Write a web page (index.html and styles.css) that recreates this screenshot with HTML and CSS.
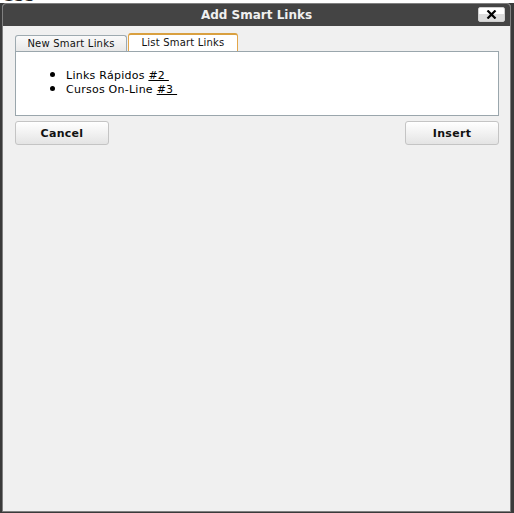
FILE: index.html
```html
<!DOCTYPE html>
<html>
<head>
<meta charset="utf-8">
<link rel="stylesheet" href="styles.css">
</head>
<body>
<div class="behind"><p>ress</p></div>
<div class="dialog">
  <div class="titlebar">
    <span class="title">Add Smart Links</span>
    <button class="close" type="button"><svg width="11" height="9" viewBox="0 0 11 9"><path d="M1.5 0.5 L9.5 8.5 M9.5 0.5 L1.5 8.5" stroke="#000" stroke-width="2.2"/></svg></button>
  </div>
  <div class="content">
    <div class="tabs">
      <div class="tab">New Smart Links</div>
      <div class="tab active">List Smart Links</div>
    </div>
    <div class="panel">
      <ul class="links">
        <li>Links Rápidos <a href="#">#2 </a></li>
        <li>Cursos On-Line <a href="#">#3 </a></li>
      </ul>
    </div>
    <div class="actions">
      <button class="btn" type="button">Cancel</button>
      <button class="btn" type="button">Insert</button>
    </div>
  </div>
</div>
</body>
</html>
```

FILE: styles.css
```css
html, body {
  margin: 0;
  padding: 0;
}
body {
  background: #3a3a3a;
  height: 513px;
  overflow: hidden;
  font-family: "DejaVu Sans", Verdana, sans-serif;
  font-size: 11px;
  color: #000;
}
.behind {
  height: 3px;
  overflow: hidden;
  background: #fff;
}
.behind p {
  margin: -16px 0 0 -6px;
  font-size: 20px;
  line-height: 20px;
  color: #222;
}
.dialog {
  margin-left: 2px;
  width: 507px;
  height: 507px;
  border: 1px solid #808080;
  border-radius: 4px 4px 0 0;
  background: #f0f0f0;
  display: flex;
  flex-direction: column;
}
.titlebar {
  height: 22px;
  background: #444444;
  border-radius: 3px 3px 0 0;
  display: flex;
  align-items: center;
  justify-content: center;
  position: relative;
}
.title {
  color: #f0f0f0;
  font-weight: bold;
  font-size: 12px;
  letter-spacing: 0;
}
.close {
  position: absolute;
  right: 5px;
  top: 3px;
  width: 27px;
  height: 15px;
  padding: 0;
  border: 1px solid #cfcfcf;
  border-radius: 2px;
  background: linear-gradient(#ffffff 0%, #ffffff 50%, #dcdcdc 50%, #dcdcdc 100%);
  display: flex;
  align-items: center;
  justify-content: center;
}
.content {
  padding: 7px 12px 0 12px;
  display: flex;
  flex-direction: column;
}
.tabs {
  display: flex;
  align-items: flex-end;
  gap: 1px;
  height: 18px;
}
.tab {
  height: 16px;
  box-sizing: border-box;
  width: 112px;
  border: 1px solid #9eaab0;
  border-bottom: none;
  border-radius: 3px 3px 0 0;
  background: linear-gradient(#fafafa, #e8e8e8);
  text-align: center;
  line-height: 16px;
  font-size: 10px;
  letter-spacing: 0.2px;
  color: #111;
}
.tab.active {
  height: 18px;
  width: 110px;
  background: #fff;
  border: 1px solid #e3a64a;
  border-top: 2px solid #d9a040;
  border-bottom: none;
  line-height: 16px;
}
.panel {
  height: 63px;
  border: 1px solid #9aa6ac;
  background: #fff;
  width: 482px;
}
.links {
  margin: 16px 0 0 0;
  padding-left: 50px;
  line-height: 13px;
  font-size: 11px;
  letter-spacing: 0.25px;
}
.links li::marker {
  font-size: 15px;
}
.links a {
  color: #000;
  text-decoration: underline;
  white-space: pre;
}
.actions {
  margin-top: 5px;
  display: flex;
  justify-content: space-between;
  width: 484px;
}
.btn {
  width: 94px;
  height: 24px;
  border: 1px solid #c4c4c4;
  border-radius: 3px;
  background: linear-gradient(#ffffff, #e4e4e4);
  font-family: "DejaVu Sans", Verdana, sans-serif;
  font-weight: bold;
  font-size: 11px;
  color: #111;
  padding: 0;
  letter-spacing: 0.3px;
}
```
